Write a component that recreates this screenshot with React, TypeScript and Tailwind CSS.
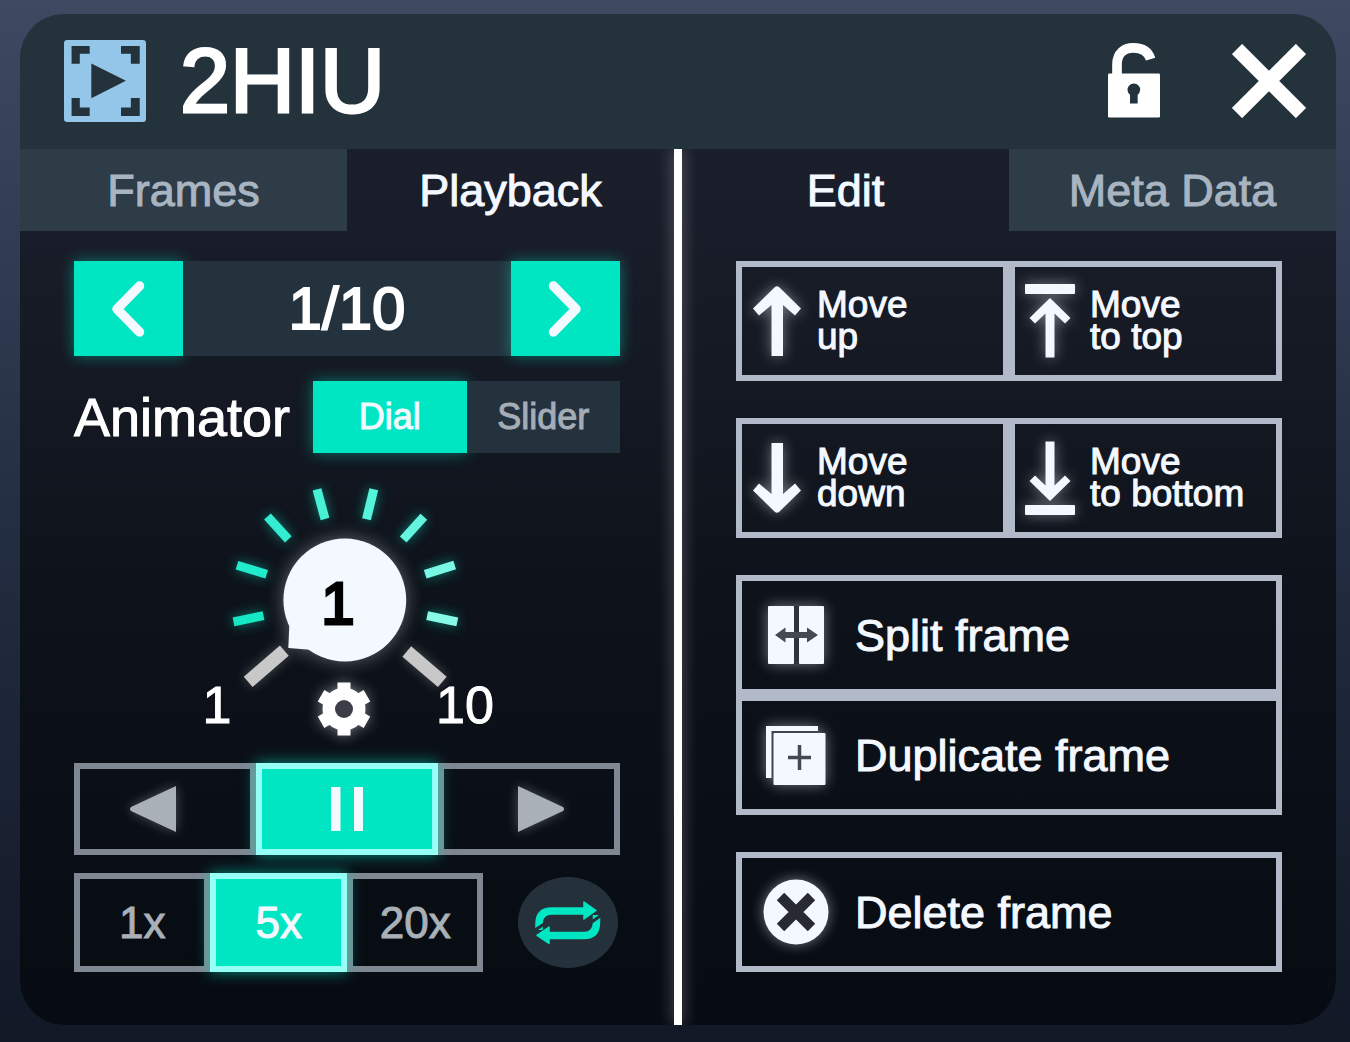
import { useState, type ReactNode } from "react";

const GLOW = "drop-shadow-[0_0_7px_rgba(244,248,255,0.45)]";

function Tab({ label, active }: { label: string; active?: boolean }) {
  return (
    <button
      role="tab"
      aria-selected={!!active}
      className={
        "flex-1 text-[45px] leading-none [-webkit-text-stroke:1px] " +
        (active ? "text-[#f4f8ff]" : "bg-[#2d3c46] text-[#a9b4c2]")
      }
    >
      {label}
    </button>
  );
}

function Chevron({ flip }: { flip?: boolean }) {
  return (
    <svg width="34" height="56" viewBox="0 0 34 56" fill="none" stroke="#f4f8ff" strokeWidth="9.500" strokeLinecap="round" strokeLinejoin="round">
      <path d={flip ? "M5.500 5 28 28 5.500 51" : "M27.500 5 5 28 27.500 51"} />
    </svg>
  );
}

function MoveButton({ first, second, children }: { first: string; second: string; children: ReactNode }) {
  return (
    <button className="flex h-[120px] flex-1 items-center gap-[15px] border-6 border-[#b2bac9] pl-2.5 text-left text-[37px] leading-8 text-[#f4f8ff] [-webkit-text-stroke:1px]">
      <span className="flex w-[50px] shrink-0 justify-center">{children}</span>
      <span>
        {first}
        <br />
        {second}
      </span>
    </button>
  );
}

function FrameButton({ label, children }: { label: string; children: ReactNode }) {
  return (
    <button className="flex h-[120px] w-full items-center gap-[26px] border-6 border-[#b2bac9] pl-[21px] text-left text-[45px] leading-none text-[#f4f8ff] [-webkit-text-stroke:1px]">
      <span className="flex w-[66px] shrink-0 justify-center">{children}</span>
      {label}
    </button>
  );
}

function ArrowIcon({ down }: { down?: boolean }) {
  return (
    <svg width="50" height="70" viewBox="0 0 50 70" fill="#f4f8ff" className={GLOW}>
      <path
        transform={down ? "matrix(1 0 0 -1 0 70)" : undefined}
        d="M23 1Q25 -.5 27 1L49 22.500 43 29.500 31 19V70H19.500V19L7 29.500 1 22.500Z"
      />
    </svg>
  );
}

function ArrowBarIcon({ down }: { down?: boolean }) {
  return (
    <svg width="50" height="74" viewBox="0 0 50 74" fill="#f4f8ff" className={GLOW}>
      <g transform={down ? "matrix(1 0 0 -1 0 74)" : undefined}>
        <rect width="50" height="10" rx="1" />
        <path d="M25 14 45.500 34 40 39.500 29.500 29.500V73.500H20.500V29.500L10 39.500 4.500 34Z" />
      </g>
    </svg>
  );
}

const TICKS = [
  { d: "M233.5 621.8 263.500 615.700", c: "#16e8c6" },
  { d: "M237 565.2 266.700 574.300", c: "#22ebcb" },
  { d: "M267.500 516.500 288.300 539.400", c: "#34edd0" },
  { d: "M317 489.300 325 519", c: "#48f0d6" },
  { d: "M373.800 489.300 366.500 519.300", c: "#55f3da" },
  { d: "M423.800 516.700 403.200 539.500", c: "#64f5df" },
  { d: "M454.700 565 425.200 574.300", c: "#78f8e5" },
  { d: "M457.300 621.800 427.200 615.700", c: "#88fae8" },
];

function Dial({ frame, onChange }: { frame: number; onChange: (n: number) => void }) {
  return (
    <div className="relative mx-auto mt-[27px] mb-[23px] h-[260px] w-[300px]">
      <svg width="300" height="260" viewBox="197 480 300 260" className="overflow-visible" aria-hidden="true">
        {TICKS.map((t) => (
          <path key={t.d} d={t.d} stroke={t.c} strokeWidth="9" className="drop-shadow-[0_0_6px_rgba(0,230,195,0.5)]" />
        ))}
        <g stroke="#c8c8c8" strokeWidth="13.500" className="drop-shadow-[0_0_6px_rgba(255,255,255,0.25)]">
          <path d="M248.200 681.800 284.300 650.700" />
          <path d="M442.300 681.800 406.800 651.500" />
        </g>
        <g fill="#f4f8ff" className="drop-shadow-[0_0_9px_rgba(244,248,255,0.35)]">
          <circle cx="344.800" cy="600" r="61.400" />
          <path d="M289.300 626 288.300 648 310 649.800 320 620Z" />
        </g>
        <g fontFamily="Liberation Sans, sans-serif" textAnchor="middle">
          <text x="338" y="624" fontSize="60" fill="#000" stroke="#000" strokeWidth="3">{frame}</text>
          <text x="217" y="723" fontSize="52" fill="#fff" stroke="#fff" strokeWidth="1">1</text>
          <text x="465" y="723" fontSize="52" fill="#fff" stroke="#fff" strokeWidth="1">10</text>
        </g>
      </svg>
      <input
        type="range"
        aria-label="Frame dial"
        min={1}
        max={10}
        value={frame}
        onChange={(e) => onChange(Number(e.target.value))}
        className="absolute inset-x-20 top-20 h-20 opacity-0"
      />
      <button aria-label="Animator settings" className="absolute bottom-1 left-[120px]">
        <svg width="54" height="54" viewBox="-27 -27 54 54" className={GLOW}>
          <circle r="21.500" fill="#fff" />
          <g fill="#fff">
            <rect x="-6.500" y="-26.500" width="13" height="53" />
            <rect x="-6.500" y="-26.500" width="13" height="53" transform="rotate(60)" />
            <rect x="-6.500" y="-26.500" width="13" height="53" transform="rotate(120)" />
          </g>
          <circle r="9" fill="#3b3e48" />
        </svg>
      </button>
    </div>
  );
}

const CELL = "flex w-1/3 items-center justify-center border-6 ";
const CELL_OFF = "border-[#7f8792] text-[#a9b0b8]";
const CELL_ON = "relative border-[#96fff6] bg-[#00e6c3] text-[#f4f8ff] shadow-[0_0_14px_rgba(0,230,195,0.6)]";
const TEAL_GLOW = "bg-[#00e6c3] text-[#f4f8ff] shadow-[0_0_14px_rgba(0,230,195,0.45)] ";

function PlaybackPane() {
  const [frame, setFrame] = useState(1);
  return (
    <section className="min-w-0 flex-1">
      <div role="tablist" className="flex h-[82px]">
        <Tab label="Frames" />
        <Tab label="Playback" active />
      </div>
      <div className="px-[54px] pt-[30px]">
        <div className="grid h-[95px] grid-cols-5">
          <button aria-label="Previous frame" onClick={() => setFrame(Math.max(1, frame - 1))} className={TEAL_GLOW + "flex items-center justify-center"}>
            <Chevron />
          </button>
          <div className="col-span-3 flex items-center justify-center bg-[#24323d] text-[60px] leading-none text-white [-webkit-text-stroke:2px]">
            {frame}/10
          </div>
          <button aria-label="Next frame" onClick={() => setFrame(Math.min(10, frame + 1))} className={TEAL_GLOW + "flex items-center justify-center"}>
            <Chevron flip />
          </button>
        </div>

        <div className="mt-[25px] flex h-[72px] items-center justify-between">
          <h2 className="text-[54px] leading-none text-white [-webkit-text-stroke:1px]">Animator</h2>
          <div className="flex h-full w-[307px] text-[36px] leading-none [-webkit-text-stroke:1px]">
            <button aria-pressed="true" className={TEAL_GLOW + "flex-1"}>Dial</button>
            <button aria-pressed="false" className="flex-1 bg-[#24323d] text-[#a4adb6]">Slider</button>
          </div>
        </div>

        <Dial frame={frame} onChange={setFrame} />

        <div className="flex h-[92px]">
          <button aria-label="Play backwards" className={CELL + CELL_OFF + " pr-6"}>
            <svg width="48" height="48" viewBox="0 0 48 48" fill="#a9b0b8" className="drop-shadow-[0_0_6px_rgba(200,210,220,0.35)]">
              <path d="M47 1V47L2 26Q0 24 2 22Z" />
            </svg>
          </button>
          <button aria-label="Pause" className={CELL + CELL_ON}>
            <svg width="32" height="44" viewBox="0 0 32 44" fill="#f4f8ff">
              <path d="M0 0H9.500V44H0ZM23 0H32V44H23Z" />
            </svg>
          </button>
          <button aria-label="Play forwards" className={CELL + CELL_OFF + " pl-6"}>
            <svg width="48" height="48" viewBox="0 0 48 48" fill="#a9b0b8" className="drop-shadow-[0_0_6px_rgba(200,210,220,0.35)]">
              <path d="M1 1V47L46 26Q48 24 46 22Z" />
            </svg>
          </button>
        </div>

        <div className="mt-[18px] flex items-center">
          <div className="flex h-[99px] w-3/4 text-[44px] leading-none [-webkit-text-stroke:1px]">
            <button className={CELL + CELL_OFF}>1x</button>
            <button aria-pressed="true" className={CELL + CELL_ON}>5x</button>
            <button className={CELL + CELL_OFF}>20x</button>
          </div>
          <button aria-label="Loop" className="mr-0.5 ml-auto flex h-[91px] w-[100px] items-center justify-center rounded-[50%] bg-[#24313b]">
            <svg width="66" height="44" viewBox="535 901 66 44" fill="none" stroke="#00e6c3" strokeWidth="7.500">
              <path d="M539 930V924Q539 911 552 911H584" />
              <path d="M596.500 915V922Q596.500 935.500 584 935.500H549" />
              <path d="M533 931.500 547 922M589 924 603 914" stroke="#24313b" strokeWidth="3" />
              <g fill="#00e6c3" stroke="#00e6c3" strokeWidth="1.500" strokeLinejoin="round">
                <path d="M584 902 596 910.500 584 919Z" />
                <path d="M549 927 537 935.300 549 943.500Z" />
              </g>
            </svg>
          </button>
        </div>
      </div>
    </section>
  );
}

function EditPane() {
  return (
    <section className="min-w-0 flex-1">
      <div role="tablist" className="flex h-[82px]">
        <Tab label="Edit" active />
        <Tab label="Meta Data" />
      </div>
      <div className="flex flex-col gap-[37px] px-[54px] pt-[30px]">
        <div className="flex">
          <MoveButton first="Move" second="up"><ArrowIcon /></MoveButton>
          <MoveButton first="Move" second="to top"><ArrowBarIcon /></MoveButton>
        </div>
        <div className="flex">
          <MoveButton first="Move" second="down"><ArrowIcon down /></MoveButton>
          <MoveButton first="Move" second="to bottom"><ArrowBarIcon down /></MoveButton>
        </div>
        <div>
          <FrameButton label="Split frame">
            <svg width="56" height="58" viewBox="0 0 56 58" className={GLOW}>
              <rect width="26" height="58" rx="1" fill="#f4f8ff" />
              <rect x="31" width="25" height="58" rx="1" fill="#f4f8ff" />
              <rect x="26" width="5" height="58" fill="#2f343b" />
              <path d="M7 29 17.500 21.500V26H39V21.500L50 29 39 36.500V32H17.500V36.500Z" fill="#454a50" />
            </svg>
          </FrameButton>
          <FrameButton label="Duplicate frame">
            <svg width="60" height="60" viewBox="0 0 60 60" className={GLOW}>
              <path d="M0 1H52V7H6V53H0Z" fill="#f4f8ff" />
              <path d="M5.500 6H52V10H9V53H5.500Z" fill="#40454c" />
              <rect x="7.500" y="8" width="52" height="52" rx="1" fill="#f4f8ff" />
              <path d="M33.500 20V45M22 32.500H45" stroke="#454a50" strokeWidth="3.500" />
            </svg>
          </FrameButton>
        </div>
        <FrameButton label="Delete frame">
          <svg width="66" height="66" viewBox="0 0 66 66" className={GLOW}>
            <circle cx="33" cy="33" r="32.500" fill="#f4f8ff" />
            <path d="M17.500 17.500 48.500 48.500M48.500 17.500 17.500 48.500" stroke="#272b31" strokeWidth="10.500" />
          </svg>
        </FrameButton>
      </div>
    </section>
  );
}

export default function App() {
  return (
    <div className="flex min-h-screen flex-col bg-linear-to-b from-[#3e4962] via-[#242e42] to-[#111826] pt-3.5 pr-3.5 pb-[17px] pl-5 font-['Liberation_Sans',sans-serif]">
      <main className="flex flex-1 flex-col overflow-hidden rounded-[44px] bg-[#24323c]">
        <header className="flex h-[135px] items-center pr-[30px] pb-0.5 pl-11">
          <svg width="82" height="82" viewBox="190 120 249 249" aria-hidden="true">
            <rect x="190" y="120" width="249" height="249" rx="10" fill="#93c6e8" />
            <path
              fill="#24323c"
              d="M213 138H268V162H238V192H213ZM363 138H420V192H393V162H363ZM213 296H238V325H268V351H213ZM393 296H420V351H363V325H393ZM273 191 378 244 273 297Z"
            />
          </svg>
          <h1 className="ml-[34px] text-[90px] leading-none text-white [-webkit-text-stroke:3px]">2HIU</h1>
          <button aria-label="Unlock" className="ml-auto">
            <svg width="52" height="75" viewBox="174 128 156 224">
              <path d="M201 221V192C201 158 222 142 250 142C277 142 295 153 302 176" fill="none" stroke="#fff" strokeWidth="29" />
              <rect x="174" y="219" width="156" height="132" rx="4" fill="#fff" />
              <path d="M240 309V283A19 19 0 1 1 263 283V309Z" fill="#24323c" />
            </svg>
          </button>
          <button aria-label="Close" className="ml-[72px]">
            <svg width="74" height="74" viewBox="0 0 74 74" stroke="#fff" strokeWidth="14.500">
              <path d="M5 5 69 69M69 5 5 69" />
            </svg>
          </button>
        </header>
        <div className="flex flex-1 overflow-hidden bg-linear-to-b from-[#1b1f2c] via-[#0e131b] to-[#070b12]">
          <PlaybackPane />
          <div className="w-2 bg-white shadow-[0_0_16px_rgba(255,255,255,0.35)]" />
          <EditPane />
        </div>
      </main>
    </div>
  );
}
